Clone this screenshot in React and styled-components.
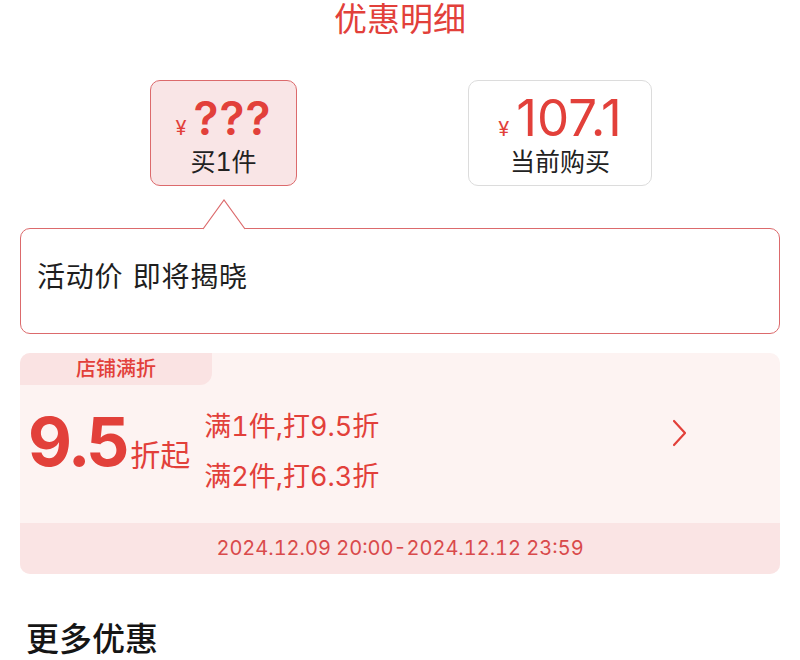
import React from 'react';
import styled, { createGlobalStyle } from 'styled-components';

const GlobalStyle = createGlobalStyle`
  body {
    margin: 0;
    background: #fff;
    font-family: "Inter", "Noto Sans CJK SC", sans-serif;
    font-feature-settings: "tnum";
  }
`;

const RED = '#e2403a';

const Page = styled.div`
  width: 800px;
  height: 660px;
  overflow: hidden;
  padding: 0 20px;
  box-sizing: border-box;
`;

const Title = styled.h1`
  margin: 0;
  height: 40px;
  line-height: 38px;
  font-size: 33px;
  font-weight: 400;
  text-align: center;
  color: ${RED};
`;

const PriceRow = styled.div`
  display: flex;
  gap: 171px;
  padding-left: 130px;
  margin-top: 40px;
`;

const PriceCard = styled.div`
  box-sizing: border-box;
  width: ${p => p.$w}px;
  height: 106px;
  border-radius: 10px;
  border: 1px solid ${p => (p.$active ? '#dc6a6c' : '#dcdcdc')};
  background: ${p => (p.$active ? '#f9e5e6' : '#fff')};
  display: flex;
  flex-direction: column;
  align-items: center;
  padding-top: 8px;
`;

const Price = styled.div`
  display: flex;
  align-items: baseline;
  color: ${RED};
  height: 58px;
`;

const Yen = styled.span`
  font-size: 20px;
  margin-right: 7px;
`;

const Amount = styled.span`
  font-size: ${p => p.$size}px;
  line-height: 58px;
  font-weight: ${p => p.$weight};
  letter-spacing: ${p => p.$ls}px;
  font-feature-settings: ${p => (p.$tnum ? '"tnum"' : 'normal')};
`;

const CardLabel = styled.div`
  font-size: 25px;
  line-height: 30px;
  color: #222;
`;

const Bubble = styled.div`
  position: relative;
  margin-top: 42px;
  height: 106px;
  box-sizing: border-box;
  border: 1px solid #dc6a6c;
  border-radius: 10px;
  display: flex;
  align-items: center;
  padding: 0 16px 12px;
  font-size: 28px;
  letter-spacing: 0.8px;
  word-spacing: 1px;
  color: #1e1e1e;
`;

const Pointer = styled.svg`
  position: absolute;
  left: 181px;
  top: -30px;
`;

const Deal = styled.div`
  margin-top: 19px;
  border-radius: 10px;
  overflow: hidden;
  background: #fdf3f2;
`;

const Tag = styled.div`
  width: 192px;
  height: 32px;
  line-height: 32px;
  background: #fae3e3;
  border-bottom-right-radius: 12px;
  text-align: center;
  color: ${RED};
  font-size: 20px;
  font-weight: 500;
`;

const DealBody = styled.div`
  height: 138px;
  display: flex;
  align-items: flex-start;
  padding: 0 8px;
  color: ${RED};
`;

const Big = styled.div`
  display: flex;
  align-items: baseline;
  margin-top: 22px;
`;

const BigNum = styled.span`
  font-size: 68px;
  font-weight: 700;
  line-height: 68px;
  letter-spacing: -2px;
`;

const BigUnit = styled.span`
  font-size: 30px;
  margin-left: 2px;
`;

const Rules = styled.div`
  margin: 27px 0 0 14px;
  display: flex;
  flex-direction: column;
  gap: 20px;
  font-size: 27px;
  line-height: 30px;
`;

const Chevron = styled.svg`
  margin: 34px 84px 0 auto;
`;

const Period = styled.div`
  height: 51px;
  line-height: 51px;
  background: #fae4e4;
  text-align: center;
  color: #d94a4b;
  font-size: 20px;
`;

const Section = styled.h2`
  margin: 45px 0 0 6px;
  font-size: 33px;
  line-height: 40px;
  font-weight: 500;
  color: #151515;
`;

export default function App() {
  return (
    <Page>
      <GlobalStyle />
      <Title>优惠明细</Title>

      <PriceRow>
        <PriceCard $active $w={147}>
          <Price>
            <Yen>¥</Yen>
            <Amount $size={46} $weight={600} $ls={1} $tnum>???</Amount>
          </Price>
          <CardLabel>买1件</CardLabel>
        </PriceCard>
        <PriceCard $w={184}>
          <Price>
            <Yen>¥</Yen>
            <Amount $size={51} $weight={400} $ls={0}>107.1</Amount>
          </Price>
          <CardLabel>当前购买</CardLabel>
        </PriceCard>
      </PriceRow>

      <Bubble>
        <Pointer width="44" height="32" viewBox="0 0 44 32">
          <polygon points="0,31 22,1 44,31" fill="#fff" />
          <polyline points="1,30 22,1 43,30" fill="none" stroke="#dc6a6c" strokeWidth="1.2" />
        </Pointer>
        活动价 即将揭晓
      </Bubble>

      <Deal>
        <Tag>店铺满折</Tag>
        <DealBody>
          <Big>
            <BigNum>9.5</BigNum>
            <BigUnit>折起</BigUnit>
          </Big>
          <Rules>
            <span>满1件,打9.5折</span>
            <span>满2件,打6.3折</span>
          </Rules>
          <Chevron width="16" height="28" viewBox="0 0 16 28">
            <polyline points="2,2 13,14 2,26" fill="none" stroke={RED} strokeWidth="2.2" strokeLinecap="round" strokeLinejoin="round" />
          </Chevron>
        </DealBody>
        <Period>2024.12.09 20:00-2024.12.12 23:59</Period>
      </Deal>

      <Section>更多优惠</Section>
    </Page>
  );
}
